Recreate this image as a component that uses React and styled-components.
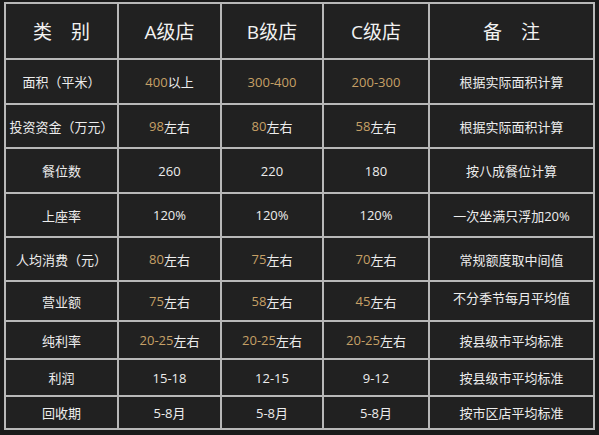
import React from 'react'
import { styled, createGlobalStyle } from 'styled-components'

const GOLD = '#c6a066'

const rows = [
  { name: '面积（平米）', a: ['400', '以上'], b: ['300-400', ''], c: ['200-300', ''], note: '根据实际面积计算', h: 43 },
  { name: '投资资金（万元）', a: ['98', '左右'], b: ['80', '左右'], c: ['58', '左右'], note: '根据实际面积计算', h: 42 },
  { name: '餐位数', a: ['', '260'], b: ['', '220'], c: ['', '180'], note: '按八成餐位计算', h: 43 },
  { name: '上座率', a: ['', '120%'], b: ['', '120%'], c: ['', '120%'], note: '一次坐满只浮加20%', h: 42 },
  { name: '人均消费（元）', a: ['80', '左右'], b: ['75', '左右'], c: ['70', '左右'], note: '常规额度取中间值', h: 42 },
  { name: '营业额', a: ['75', '左右'], b: ['58', '左右'], c: ['45', '左右'], note: '不分季节每月平均值', h: 38, lift: true },
  { name: '纯利率', a: ['20-25', '左右'], b: ['20-25', '左右'], c: ['20-25', '左右'], note: '按县级市平均标准', h: 36 },
  { name: '利润', a: ['', '15-18'], b: ['', '12-15'], c: ['', '9-12'], note: '按县级市平均标准', h: 35 },
  { name: '回收期', a: ['', '5-8月'], b: ['', '5-8月'], c: ['', '5-8月'], note: '按市区店平均标准', h: 31 },
]

const GlobalStyle = createGlobalStyle`
  body {
    margin: 0;
    background: #1a1a1a;
    font-family: "Open Sans", "Noto Sans CJK SC", sans-serif;
  }
`

const Page = styled.div`
  width: 599px;
  height: 435px;
  padding: 2px 0 0 4px;
  box-sizing: border-box;
  background: #1a1a1a;
`

const Grid = styled.div`
  display: grid;
  grid-template-columns: 111px 101px 100px 104px 163px;
  grid-template-rows: 54px ${rows.map(r => `${r.h}px`).join(' ')};
  gap: 2px;
  padding: 2px;
  width: fit-content;
  background: #b8b8b8;
`

const HeadCell = styled.div`
  display: flex;
  align-items: center;
  justify-content: center;
  background: #212121;
  color: #f2f2f2;
  font-size: 19px;
  white-space: pre;
`

const Cell = styled.div`
  display: flex;
  align-items: center;
  justify-content: center;
  background: #212121;
  color: #ededed;
  font-size: 13px;
  white-space: nowrap;
  padding-bottom: ${p => (p.$lift ? '8px' : '0')};
`

const Num = styled.span`
  color: ${GOLD};
`

const Value = ({ parts }) => (
  <Cell>
    {parts[0] && <Num>{parts[0]}</Num>}
    {parts[1]}
  </Cell>
)

const App = () => {
  return (
    <Page>
      <GlobalStyle />
      <Grid>
        <HeadCell>类　别</HeadCell>
        <HeadCell>A级店</HeadCell>
        <HeadCell>B级店</HeadCell>
        <HeadCell>C级店</HeadCell>
        <HeadCell>备　注</HeadCell>
        {rows.map(row => (
          <React.Fragment key={row.name}>
            <Cell>{row.name}</Cell>
            <Value parts={row.a} />
            <Value parts={row.b} />
            <Value parts={row.c} />
            <Cell $lift={row.lift}>{row.note}</Cell>
          </React.Fragment>
        ))}
      </Grid>
    </Page>
  )
}

export default App
